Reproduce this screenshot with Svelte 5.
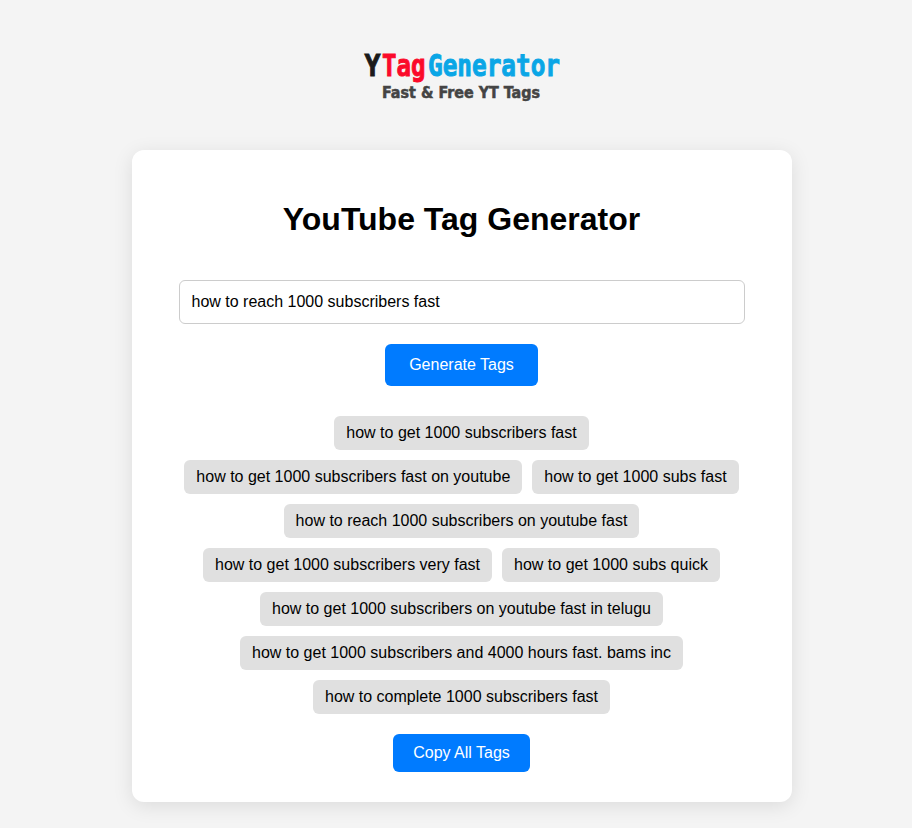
<script>
    let keyword = $state('how to reach 1000 subscribers fast');

    const tags = [
        'how to get 1000 subscribers fast',
        'how to get 1000 subscribers fast on youtube',
        'how to get 1000 subs fast',
        'how to reach 1000 subscribers on youtube fast',
        'how to get 1000 subscribers very fast',
        'how to get 1000 subs quick',
        'how to get 1000 subscribers on youtube fast in telugu',
        'how to get 1000 subscribers and 4000 hours fast. bams inc',
        'how to complete 1000 subscribers fast'
    ];

    function copyTags() {
        navigator.clipboard.writeText(tags.join(', '));
    }
</script>

<header>
    <svg class="logo" viewBox="0 0 200 64" role="img" aria-label="YTagGenerator">
        <text class="name dark" x="2.5" y="34" textLength="16" lengthAdjust="spacingAndGlyphs">Y</text>
        <text class="name red" x="20" y="34" textLength="43.5" lengthAdjust="spacingAndGlyphs">Tag</text>
        <text class="name blue" x="66" y="34" textLength="132" lengthAdjust="spacingAndGlyphs">Generator</text>
        <text class="slogan" x="20" y="55.5" textLength="158" lengthAdjust="spacingAndGlyphs">Fast &amp; Free YT Tags</text>
    </svg>
</header>

<main class="container">
    <h1>YouTube Tag Generator</h1>
    <input type="text" bind:value={keyword} />
    <button class="generate">Generate Tags</button>
    <div class="tags">
        {#each tags as tag}
            <span class="tag">{tag}</span>
        {/each}
    </div>
    <button class="copy" onclick={copyTags}>Copy All Tags</button>
</main>

<style>
    :global(body) {
        padding-left: 11px;
        background: #f4f4f4;
        font-family: Arial, 'Liberation Sans', sans-serif;
    }

    header {
        display: flex;
        justify-content: center;
        height: 150px;
        padding-top: 42px;
        box-sizing: border-box;
    }

    .logo {
        width: 200px;
        height: 64px;
        overflow: visible;
    }

    .name {
        font: bold 31px 'DejaVu Sans Mono', monospace;
        stroke-width: 1;
    }

    .dark {
        fill: #1a1a1a;
        stroke: #1a1a1a;
    }

    .red {
        fill: #fb0a2a;
        stroke: #fb0a2a;
    }

    .blue {
        fill: #0aa6e6;
        stroke: #0aa6e6;
    }

    .slogan {
        font: bold 15.5px 'DejaVu Sans Condensed', 'DejaVu Sans', sans-serif;
        fill: #444;
        stroke: #444;
        stroke-width: 0.5;
    }

    .container {
        display: flex;
        flex-direction: column;
        align-items: center;
        box-sizing: border-box;
        width: 660px;
        height: 652px;
        margin: 0 auto 26px;
        padding: 51px 30px 30px;
        background: #fff;
        border-radius: 12px;
        box-shadow: 0 4px 20px rgba(0, 0, 0, 0.1);
    }

    h1 {
        margin: 0 0 42px;
        font-size: 32px;
        line-height: 37px;
    }

    input {
        box-sizing: border-box;
        width: 566px;
        height: 44px;
        padding: 12px;
        border: 1px solid #ccc;
        border-radius: 6px;
        font: 16px 'Liberation Sans', sans-serif;
    }

    button {
        border: none;
        border-radius: 6px;
        background: #007bff;
        color: #fff;
        font: 16px 'Liberation Sans', sans-serif;
        cursor: pointer;
    }

    .generate {
        width: 153px;
        height: 42px;
        margin: 20px 0 30px;
    }

    .tags {
        display: flex;
        flex-wrap: wrap;
        justify-content: center;
        gap: 10px;
        width: 600px;
    }

    .tag {
        padding: 8px 12px;
        background: #e0e0e0;
        border-radius: 6px;
        font-size: 16px;
        line-height: 18px;
    }

    .copy {
        width: 137px;
        height: 38px;
        margin-top: 20px;
    }
</style>
